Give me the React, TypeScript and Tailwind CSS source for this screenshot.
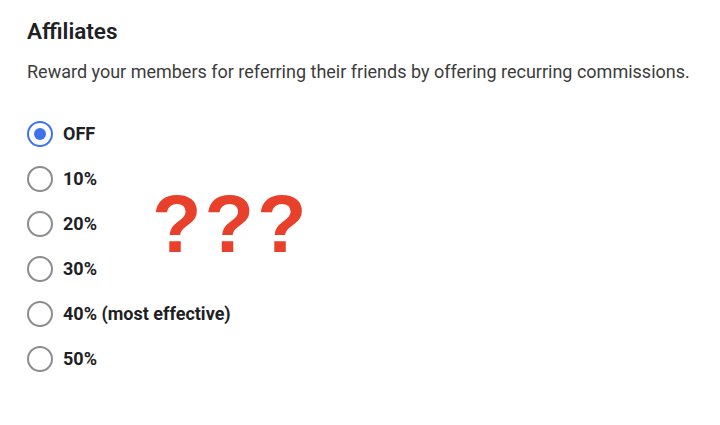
import { useState } from "react";

const options = [
  { value: "0", label: "OFF" },
  { value: "10", label: "10%" },
  { value: "20", label: "20%" },
  { value: "30", label: "30%" },
  { value: "40", label: "40% (most effective)" },
  { value: "50", label: "50%" },
];

function Radio({ checked }: { checked: boolean }) {
  return (
    <span
      className={
        checked
          ? "flex h-[26px] w-[26px] items-center justify-center rounded-full border-[2.5px] border-[#3f73ee]"
          : "flex h-[26px] w-[26px] items-center justify-center rounded-full border-[2px] border-[#8c8c8c]"
      }
    >
      {checked && <span className="h-[12px] w-[12px] rounded-full bg-[#3f73ee]" />}
    </span>
  );
}

export default function App() {
  const [selected, setSelected] = useState("0");

  return (
    <div
      className="relative h-[425px] w-[720px] bg-white px-[27px] pt-[17px] text-[#202124]"
      style={{ fontFamily: "Roboto, 'Noto Sans', sans-serif" }}
    >
      <h2 className="text-[22.5px] font-semibold leading-[28px]">Affiliates</h2>
      <p className="mt-[14px] text-[18px] leading-[26px] text-[#3c3c3c]">
        Reward your members for referring their friends by offering recurring commissions.
      </p>

      <div className="mt-[26px] flex flex-col">
        {options.map((o) => (
          <label
            key={o.value}
            className="flex h-[45px] cursor-pointer items-center gap-[10px]"
            onClick={() => setSelected(o.value)}
          >
            <Radio checked={selected === o.value} />
            <span className="text-[18px] font-bold text-[#202124]">{o.label}</span>
          </label>
        ))}
      </div>

      <div
        className="absolute left-[152px] top-[184px] text-[81px] font-bold leading-none tracking-[3px] text-[#e8402a]"
        style={{ fontFamily: "'Liberation Sans', Arial, sans-serif" }}
      >
        ???
      </div>
    </div>
  );
}
